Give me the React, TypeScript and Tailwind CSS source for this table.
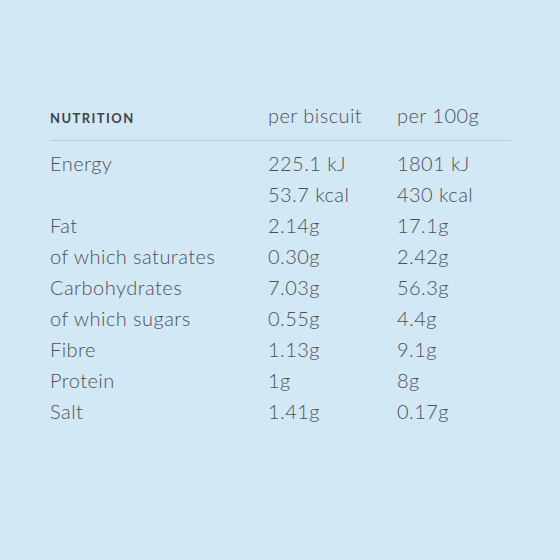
import React from 'react';

interface NutritionRow {
  label: string;
  perBiscuit: string;
  per100g: string;
}

const rows: NutritionRow[] = [
  { label: 'Energy', perBiscuit: '225.1 kJ', per100g: '1801 kJ' },
  { label: '', perBiscuit: '53.7 kcal', per100g: '430 kcal' },
  { label: 'Fat', perBiscuit: '2.14g', per100g: '17.1g' },
  { label: 'of which saturates', perBiscuit: '0.30g', per100g: '2.42g' },
  { label: 'Carbohydrates', perBiscuit: '7.03g', per100g: '56.3g' },
  { label: 'of which sugars', perBiscuit: '0.55g', per100g: '4.4g' },
  { label: 'Fibre', perBiscuit: '1.13g', per100g: '9.1g' },
  { label: 'Protein', perBiscuit: '1g', per100g: '8g' },
  { label: 'Salt', perBiscuit: '1.41g', per100g: '0.17g' },
];

const App: React.FC = () => {
  return (
    <div className="w-[560px] h-[560px] bg-[#d3e8f5] pt-[101px] pl-[50px] text-[#4d5154] font-['Lato',sans-serif]">
      <div className="w-[461px]">
        <div className="grid grid-cols-[218px_129px_1fr] items-start h-[40px] border-b border-[#b4cfdf]">
          <span className="text-[13px] leading-[28px] pt-[3px] font-bold tracking-[0.11em] text-[#3f4448]">NUTRITION</span>
          <span className="text-[20px] leading-[28px] font-light tracking-[0.45px]">per biscuit</span>
          <span className="text-[20px] leading-[28px] font-light tracking-[0.45px]">per 100g</span>
        </div>

        <div className="pt-[6px]">
          {rows.map((row, i) => (
            <div key={i} className="grid grid-cols-[218px_129px_1fr] items-center h-[31px] text-[20px] font-light tracking-[0.45px]">
              <span>{row.label}</span>
              <span>{row.perBiscuit}</span>
              <span>{row.per100g}</span>
            </div>
          ))}
        </div>
      </div>
    </div>
  );
};

export default App;
